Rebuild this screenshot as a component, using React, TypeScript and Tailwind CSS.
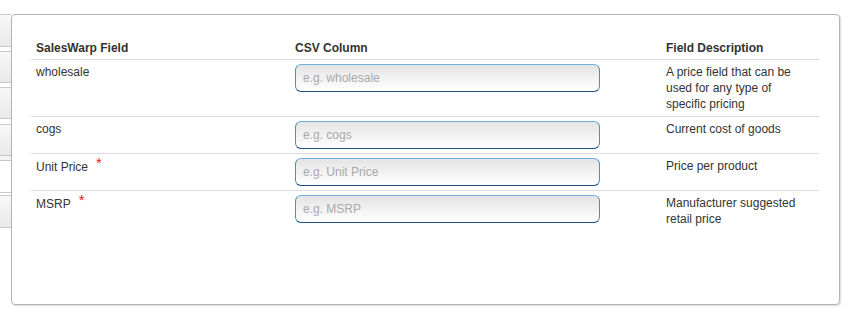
import React from "react";

type Row = { field: string; required?: boolean; placeholder: string; desc: string };

const rows: Row[] = [
  { field: "wholesale", placeholder: "e.g. wholesale", desc: "A price field that can be used for any type of specific pricing" },
  { field: "cogs", placeholder: "e.g. cogs", desc: "Current cost of goods" },
  { field: "Unit Price", required: true, placeholder: "e.g. Unit Price", desc: "Price per product" },
  { field: "MSRP", required: true, placeholder: "e.g. MSRP", desc: "Manufacturer suggested retail price" },
];

function Stub({ h, className = "" }: { h: string; className?: string }) {
  return (
    <div
      className={`w-[20px] border-y border-[#c9c9c9] bg-linear-to-b from-[#f8f8f8] to-[#e9e9e9] ${h} ${className}`}
    />
  );
}

export default function App() {
  return (
    <div
      className="flex h-[319px] w-[849px] bg-white text-[12px] leading-[16px] text-[#333]"
      style={{ fontFamily: '"Liberation Sans", Arial, sans-serif' }}
    >
      <div className="flex w-[11px] shrink-0 flex-col overflow-hidden">
        <Stub h="h-[33px]" className="mt-[14px]" />
        <Stub h="h-[32px]" className="mt-[4px]" />
        <Stub h="h-[32px]" className="mt-[4px]" />
        <Stub h="h-[32px]" className="mt-[5px]" />
        <div className="h-[5px] w-[20px] border-b border-[#c9c9c9] bg-[#f4f4f4]" />
        <div className="mt-[31px] w-[20px] border-y border-[#c9c9c9]">
          <div className="h-[3px] border-b border-[#c9c9c9] bg-white" />
          <div className="h-[31px] bg-linear-to-b from-[#f8f8f8] to-[#e9e9e9]" />
        </div>
      </div>
      <div className="mt-[14px] h-[291px] w-[829px] shrink-0 rounded-[4px] border border-[#b4b4b4] bg-white px-[19px] pt-[21px] shadow-[1px_1px_2px_rgba(0,0,0,0.15)]">
        <table className="w-[788px] table-fixed border-collapse">
          <colgroup>
            <col className="w-[259px]" />
            <col className="w-[371px]" />
            <col className="w-[158px]" />
          </colgroup>
          <thead>
            <tr className="border-b border-[#dddddd]">
              <th className="px-[5px] pt-[4px] pb-[3px] text-left font-bold">SalesWarp Field</th>
              <th className="px-[5px] pt-[4px] pb-[3px] text-left font-bold">CSV Column</th>
              <th className="px-[5px] pt-[4px] pb-[3px] text-left font-bold">Field Description</th>
            </tr>
          </thead>
          <tbody>
            {rows.map((r, i) => (
              <tr key={r.field} className={i < rows.length - 1 ? "border-b border-[#dddddd]" : ""}>
                <td className="px-[5px] py-[4px] align-top">
                  {r.field}
                  {r.required && (
                    <span className="ml-[8px] align-[3px] text-[15px] leading-[10px] text-[#e8192c]">*</span>
                  )}
                </td>
                <td className="px-[5px] py-[4px] align-top">
                  <input
                    readOnly
                    placeholder={r.placeholder}
                    className="block h-[28px] w-[305px] rounded-[6px] border border-[#4b8dbd] border-t-[#6cb0dc] border-b-[#1f4e7a] bg-linear-to-b from-[#e4e4e4] to-white px-[7px] text-[12px] text-[#333] placeholder:text-[#a9a9a9] outline-none"
                    style={{ fontFamily: '"Liberation Sans", Arial, sans-serif' }}
                  />
                </td>
                <td className="px-[5px] py-[4px] align-top">{r.desc}</td>
              </tr>
            ))}
          </tbody>
        </table>
      </div>
    </div>
  );
}
